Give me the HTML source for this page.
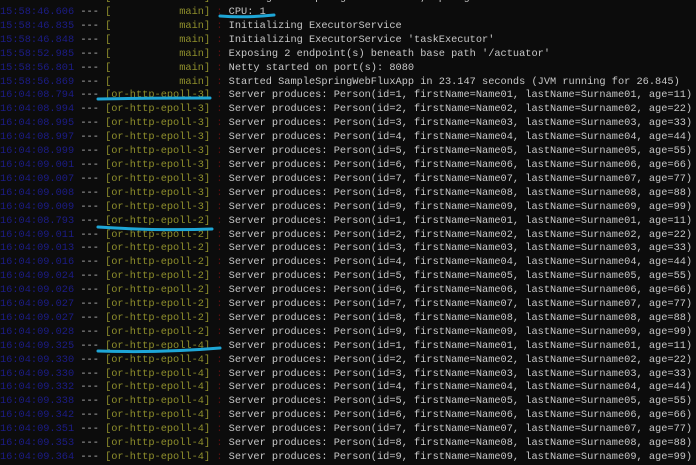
<!DOCTYPE html>
<html><head><meta charset="utf-8"><style>
html,body{margin:0;padding:0;background:#0c0c0c;width:696px;height:463px;overflow:hidden}
pre{margin:0;position:absolute;left:0;top:-7.9px;font-family:"Liberation Mono",monospace;font-size:10.3px;line-height:13.9px;color:#c8c8c8;white-space:pre}
.t{color:#1c1c86}.d{color:#bdbdbd}.b{color:#8f8f2c}.c{color:#5a1010}
svg{position:absolute;left:0;top:0}
</style></head><body>
<pre><span class="t">15:58:46.602</span> <span class="d">---</span> <span class="b">[           main]</span> <span class="c">:</span> Running with Spring Boot v2.1.0, Spring v5.1.2
<span class="t">15:58:46.606</span> <span class="d">---</span> <span class="b">[           main]</span> <span class="c">:</span> CPU: 1
<span class="t">15:58:46.835</span> <span class="d">---</span> <span class="b">[           main]</span> <span class="c">:</span> Initializing ExecutorService
<span class="t">15:58:46.848</span> <span class="d">---</span> <span class="b">[           main]</span> <span class="c">:</span> Initializing ExecutorService 'taskExecutor'
<span class="t">15:58:52.985</span> <span class="d">---</span> <span class="b">[           main]</span> <span class="c">:</span> Exposing 2 endpoint(s) beneath base path '/actuator'
<span class="t">15:58:56.801</span> <span class="d">---</span> <span class="b">[           main]</span> <span class="c">:</span> Netty started on port(s): 8080
<span class="t">15:58:56.869</span> <span class="d">---</span> <span class="b">[           main]</span> <span class="c">:</span> Started SampleSpringWebFluxApp in 23.147 seconds (JVM running for 26.845)
<span class="t">16:04:08.794</span> <span class="d">---</span> <span class="b">[or-http-epoll-3]</span> <span class="c">:</span> Server produces: Person(id=1, firstName=Name01, lastName=Surname01, age=11)
<span class="t">16:04:08.994</span> <span class="d">---</span> <span class="b">[or-http-epoll-3]</span> <span class="c">:</span> Server produces: Person(id=2, firstName=Name02, lastName=Surname02, age=22)
<span class="t">16:04:08.995</span> <span class="d">---</span> <span class="b">[or-http-epoll-3]</span> <span class="c">:</span> Server produces: Person(id=3, firstName=Name03, lastName=Surname03, age=33)
<span class="t">16:04:08.997</span> <span class="d">---</span> <span class="b">[or-http-epoll-3]</span> <span class="c">:</span> Server produces: Person(id=4, firstName=Name04, lastName=Surname04, age=44)
<span class="t">16:04:08.999</span> <span class="d">---</span> <span class="b">[or-http-epoll-3]</span> <span class="c">:</span> Server produces: Person(id=5, firstName=Name05, lastName=Surname05, age=55)
<span class="t">16:04:09.001</span> <span class="d">---</span> <span class="b">[or-http-epoll-3]</span> <span class="c">:</span> Server produces: Person(id=6, firstName=Name06, lastName=Surname06, age=66)
<span class="t">16:04:09.007</span> <span class="d">---</span> <span class="b">[or-http-epoll-3]</span> <span class="c">:</span> Server produces: Person(id=7, firstName=Name07, lastName=Surname07, age=77)
<span class="t">16:04:09.008</span> <span class="d">---</span> <span class="b">[or-http-epoll-3]</span> <span class="c">:</span> Server produces: Person(id=8, firstName=Name08, lastName=Surname08, age=88)
<span class="t">16:04:09.009</span> <span class="d">---</span> <span class="b">[or-http-epoll-3]</span> <span class="c">:</span> Server produces: Person(id=9, firstName=Name09, lastName=Surname09, age=99)
<span class="t">16:04:08.793</span> <span class="d">---</span> <span class="b">[or-http-epoll-2]</span> <span class="c">:</span> Server produces: Person(id=1, firstName=Name01, lastName=Surname01, age=11)
<span class="t">16:04:09.011</span> <span class="d">---</span> <span class="b">[or-http-epoll-2]</span> <span class="c">:</span> Server produces: Person(id=2, firstName=Name02, lastName=Surname02, age=22)
<span class="t">16:04:09.013</span> <span class="d">---</span> <span class="b">[or-http-epoll-2]</span> <span class="c">:</span> Server produces: Person(id=3, firstName=Name03, lastName=Surname03, age=33)
<span class="t">16:04:09.016</span> <span class="d">---</span> <span class="b">[or-http-epoll-2]</span> <span class="c">:</span> Server produces: Person(id=4, firstName=Name04, lastName=Surname04, age=44)
<span class="t">16:04:09.024</span> <span class="d">---</span> <span class="b">[or-http-epoll-2]</span> <span class="c">:</span> Server produces: Person(id=5, firstName=Name05, lastName=Surname05, age=55)
<span class="t">16:04:09.026</span> <span class="d">---</span> <span class="b">[or-http-epoll-2]</span> <span class="c">:</span> Server produces: Person(id=6, firstName=Name06, lastName=Surname06, age=66)
<span class="t">16:04:09.027</span> <span class="d">---</span> <span class="b">[or-http-epoll-2]</span> <span class="c">:</span> Server produces: Person(id=7, firstName=Name07, lastName=Surname07, age=77)
<span class="t">16:04:09.027</span> <span class="d">---</span> <span class="b">[or-http-epoll-2]</span> <span class="c">:</span> Server produces: Person(id=8, firstName=Name08, lastName=Surname08, age=88)
<span class="t">16:04:09.028</span> <span class="d">---</span> <span class="b">[or-http-epoll-2]</span> <span class="c">:</span> Server produces: Person(id=9, firstName=Name09, lastName=Surname09, age=99)
<span class="t">16:04:09.325</span> <span class="d">---</span> <span class="b">[or-http-epoll-4]</span> <span class="c">:</span> Server produces: Person(id=1, firstName=Name01, lastName=Surname01, age=11)
<span class="t">16:04:09.330</span> <span class="d">---</span> <span class="b">[or-http-epoll-4]</span> <span class="c">:</span> Server produces: Person(id=2, firstName=Name02, lastName=Surname02, age=22)
<span class="t">16:04:09.330</span> <span class="d">---</span> <span class="b">[or-http-epoll-4]</span> <span class="c">:</span> Server produces: Person(id=3, firstName=Name03, lastName=Surname03, age=33)
<span class="t">16:04:09.332</span> <span class="d">---</span> <span class="b">[or-http-epoll-4]</span> <span class="c">:</span> Server produces: Person(id=4, firstName=Name04, lastName=Surname04, age=44)
<span class="t">16:04:09.338</span> <span class="d">---</span> <span class="b">[or-http-epoll-4]</span> <span class="c">:</span> Server produces: Person(id=5, firstName=Name05, lastName=Surname05, age=55)
<span class="t">16:04:09.342</span> <span class="d">---</span> <span class="b">[or-http-epoll-4]</span> <span class="c">:</span> Server produces: Person(id=6, firstName=Name06, lastName=Surname06, age=66)
<span class="t">16:04:09.351</span> <span class="d">---</span> <span class="b">[or-http-epoll-4]</span> <span class="c">:</span> Server produces: Person(id=7, firstName=Name07, lastName=Surname07, age=77)
<span class="t">16:04:09.353</span> <span class="d">---</span> <span class="b">[or-http-epoll-4]</span> <span class="c">:</span> Server produces: Person(id=8, firstName=Name08, lastName=Surname08, age=88)
<span class="t">16:04:09.364</span> <span class="d">---</span> <span class="b">[or-http-epoll-4]</span> <span class="c">:</span> Server produces: Person(id=9, firstName=Name09, lastName=Surname09, age=99)
</pre>
<svg width="696" height="463" fill="none" stroke="#1ea6d6" stroke-width="3" stroke-linecap="round">
<path d="M220 16 Q245 18 274 15"/>
<path d="M98 99 Q150 98 210 98"/>
<path d="M98 227 Q160 231 212 229"/>
<path d="M98 351 Q160 353 220 348"/>
</svg>
</body></html>
